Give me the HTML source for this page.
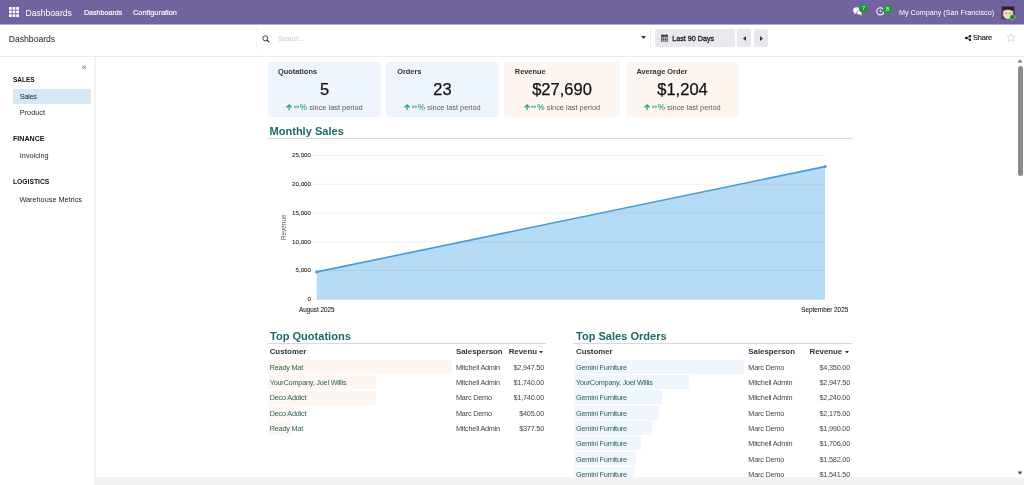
<!DOCTYPE html>
<html><head><meta charset="utf-8">
<style>
*{box-sizing:border-box;margin:0;padding:0}
html,body{width:1024px;height:485px;overflow:hidden;background:#fff;will-change:transform;font-family:"Liberation Sans",sans-serif;color:#222}
.a{position:absolute;white-space:nowrap;line-height:1}
#nav{position:absolute;left:0;top:0;width:1024px;height:24px;background:#71639e;color:#fff}
#cp{position:absolute;left:0;top:24px;width:1024px;height:33px;background:#fff;border-bottom:1px solid #eaeaea}
#side{position:absolute;left:0;top:57px;width:96px;height:428px;background:#fff;border-right:2px solid #f3f3f3}
.card{position:absolute;top:62px;height:55px;border-radius:4px}
.card .t{position:absolute;left:10px;top:6px;font-size:7.4px;font-weight:bold;color:#333;line-height:1}
.card .v{position:absolute;left:0;right:0;top:81px;text-align:center;font-size:16.5px;color:#111;line-height:1;-webkit-text-stroke:0.25px #111}
.card .d{position:absolute;left:0;right:0;top:42px;height:8px;display:flex;justify-content:center;align-items:baseline;font-size:7.4px;color:#5a5a5a;line-height:1}
.card .d .inf{margin-right:0.8px;position:relative;top:-1.5px}
.card .d .pct{color:#2aa07b;font-size:8.2px;margin-right:2.3px;-webkit-text-stroke:0.1px #2aa07b}
.card .d .sl{}
.h{position:absolute;font-weight:bold;font-size:11.05px;color:#1a6a66;line-height:1;white-space:nowrap}
.th{position:absolute;font-weight:bold;font-size:7.85px;color:#333;line-height:1;white-space:nowrap}
.td{position:absolute;font-size:7.3px;letter-spacing:-0.22px;color:#474747;line-height:1;white-space:nowrap}
.cu{color:#2a6153}
.r{text-align:right}
.bar{position:absolute;height:14px}
</style></head><body>
<div id="nav">
  <svg class="a" style="left:9.2px;top:7.1px" width="10" height="10" viewBox="0 0 10 10" fill="#fff"><rect x="0.00" y="0.00" width="2.75" height="2.75" rx="0.3"/><rect x="3.60" y="0.00" width="2.75" height="2.75" rx="0.3"/><rect x="7.20" y="0.00" width="2.75" height="2.75" rx="0.3"/><rect x="0.00" y="3.60" width="2.75" height="2.75" rx="0.3"/><rect x="3.60" y="3.60" width="2.75" height="2.75" rx="0.3"/><rect x="7.20" y="3.60" width="2.75" height="2.75" rx="0.3"/><rect x="0.00" y="7.20" width="2.75" height="2.75" rx="0.3"/><rect x="3.60" y="7.20" width="2.75" height="2.75" rx="0.3"/><rect x="7.20" y="7.20" width="2.75" height="2.75" rx="0.3"/></svg>
  <div class="a" style="left:25.5px;top:9px;font-size:8.6px">Dashboards</div>
  <div class="a" style="left:84px;top:9.6px;font-size:7.1px;-webkit-text-stroke:0.15px #fff">Dashboards</div>
  <div class="a" style="left:133px;top:9px;font-size:7.4px;-webkit-text-stroke:0.15px #fff">Configuration</div>
  <!-- chat icon -->
  <svg class="a" style="left:852.6px;top:7.4px" width="10" height="9" viewBox="0 0 11 10">
    <ellipse cx="4" cy="3.5" rx="3.9" ry="3.1" fill="#fff"/>
    <path d="M1.6 5.6 L1.2 8 L4 6.3Z" fill="#fff"/>
    <ellipse cx="7.1" cy="6.3" rx="3.1" ry="2.5" fill="#fff" stroke="#71639e" stroke-width="0.7"/>
    <path d="M8.8 8 L9.9 9.7 L7.4 8.6Z" fill="#fff"/>
  </svg>
  <div class="a" style="left:859.3px;top:4.4px;width:9px;height:9px;border-radius:50%;background:#21963b;color:#fff;font-size:5.2px;text-align:center;line-height:9px">7</div>
  <!-- clock icon -->
  <svg class="a" style="left:876.2px;top:7.4px" width="8.6" height="8.6" viewBox="0 0 9 9">
    <circle cx="4.5" cy="4.5" r="3.7" fill="none" stroke="#fff" stroke-width="1.1"/>
    <path d="M4.5 2.5 V4.7 H6" fill="none" stroke="#fff" stroke-width="0.8"/>
  </svg>
  <div class="a" style="left:883.2px;top:5px;width:8.6px;height:8.6px;border-radius:50%;background:#21963b;color:#fff;font-size:5.6px;text-align:center;line-height:8.6px">8</div>
  <div class="a" style="left:899px;top:9.2px;font-size:7.2px">My Company (San Francisco)</div>
  <!-- avatar -->
  <svg class="a" style="left:1001px;top:6px" width="15" height="15" viewBox="0 0 15 15">
    <rect x="0" y="0" width="14" height="13.6" rx="1" fill="#5a4058"/>
    <path d="M1.5 1 H12.5 V4 H1.5Z" fill="#2a1c26"/>
    <path d="M2.5 5 Q4 2.5 8 3 Q11.5 3.5 12 6 L12 10 Q10 13.5 6.5 13 Q3 12.5 2 9Z" fill="#f3dcc0"/>
    <path d="M3 4.5 Q7 2.6 12 5 L12 3.6 Q7 1.6 3 3.4Z" fill="#3a2630"/>
    <path d="M4 7.2H6.2M7.8 7.2H10.3" stroke="#8a6a5a" stroke-width="0.7"/>
    <circle cx="11.3" cy="11.2" r="2.6" fill="#0f8f22" stroke="#cfe" stroke-width="0.5"/>
  </svg>
</div>
<div id="cp">
  <div class="a" style="left:0;top:0;width:1024px;height:1px;background:#b3acc6"></div>
  <div class="a" style="left:8.8px;top:10.8px;font-size:8.6px;color:#222">Dashboards</div>
  <!-- search -->
  <div class="a" style="left:256px;top:4px;width:398px;height:22px;border-left:1px solid #f3f3f3"></div>
  <svg class="a" style="left:261.8px;top:10.8px" width="8" height="8" viewBox="0 0 8 8">
    <circle cx="3.3" cy="3.3" r="2.5" fill="none" stroke="#333" stroke-width="0.95"/>
    <path d="M5.1 5.1 L7 7" stroke="#333" stroke-width="1.1" stroke-linecap="round"/>
  </svg>
  <div class="a" style="left:278px;top:11.8px;font-size:6.6px;color:#c8c8c8">Search...</div>
  <svg class="a" style="left:640.5px;top:12px" width="5" height="3" viewBox="0 0 5 3"><path d="M0 0H5L2.5 3Z" fill="#333"/></svg>
  <div class="a" style="left:650px;top:4px;width:1px;height:20px;background:#eee"></div>
  <!-- date btn -->
  <div class="a" style="left:655px;top:5.2px;width:80px;height:17.5px;background:#e7e9ed;border-radius:2px"></div>
  <svg class="a" style="left:661px;top:10.3px" width="7.2" height="7.4" viewBox="0 0 7.2 7.4">
    <path d="M1.9 0.2V1.6M5.3 0.2V1.6" stroke="#333" stroke-width="0.9"/>
    <rect x="0.35" y="1.2" width="6.5" height="5.9" fill="none" stroke="#333" stroke-width="0.7"/>
    <rect x="0.35" y="1.2" width="6.5" height="1.5" fill="#333"/>
    <path d="M0.4 4.1H6.8M0.4 5.6H6.8M2.5 2.7V7M4.7 2.7V7" stroke="#333" stroke-width="0.55"/>
  </svg>
  <div class="a" style="left:672.2px;top:10.6px;font-size:7.2px;color:#222;-webkit-text-stroke:0.3px #222">Last 90 Days</div>
  <div class="a" style="left:737px;top:5.2px;width:14px;height:17.5px;background:#e7e9ed;border-radius:2px"></div>
  <svg class="a" style="left:742.5px;top:11.8px" width="3" height="5" viewBox="0 0 3 5"><path d="M3 0V5L0 2.5Z" fill="#333"/></svg>
  <div class="a" style="left:754px;top:5.2px;width:13.5px;height:17.5px;background:#e7e9ed;border-radius:2px"></div>
  <svg class="a" style="left:759.5px;top:11.8px" width="3" height="5" viewBox="0 0 3 5"><path d="M0 0V5L3 2.5Z" fill="#333"/></svg>
  <!-- share -->
  <svg class="a" style="left:964.5px;top:10.7px" width="6.4" height="6" viewBox="0 0 6.4 6">
    <circle cx="5.1" cy="1.2" r="1.2" fill="#111"/><circle cx="1.2" cy="3" r="1.2" fill="#111"/><circle cx="5.1" cy="4.8" r="1.2" fill="#111"/>
    <path d="M1.2 3L5.1 1.2M1.2 3L5.1 4.8" stroke="#111" stroke-width="0.9"/>
  </svg>
  <div class="a" style="left:973px;top:10.4px;font-size:7.4px;letter-spacing:-0.15px;color:#222;-webkit-text-stroke:0.15px #222">Share</div>
  <svg class="a" style="left:1006px;top:8.6px" width="10" height="9" viewBox="0 0 24 23">
    <path d="M12 1.5l3.1 6.6 7.2.9-5.3 5 1.4 7.1L12 17.6l-6.4 3.5 1.4-7.1-5.3-5 7.2-.9z" fill="none" stroke="#cfcfcf" stroke-width="1.8"/>
  </svg>
</div>
<div id="side">
  <svg class="a" style="left:81.6px;top:7.8px" width="4.6" height="4.4" viewBox="0 0 4.6 4.4"><path d="M2.2 0.4L0.5 2.2L2.2 4M4.2 0.4L2.5 2.2L4.2 4" fill="none" stroke="#555" stroke-width="0.8"/></svg>
  <div class="a" style="left:13px;top:20px;font-size:6.5px;font-weight:bold;color:#111">SALES</div>
  <div class="a" style="left:13.3px;top:32px;width:77.5px;height:15px;background:#d5e8f6;border-radius:1px"></div>
  <div class="a" style="left:19.8px;top:36px;font-size:7.3px;letter-spacing:-0.3px;color:#1f1f1f">Sales</div>
  <div class="a" style="left:19.8px;top:51.6px;font-size:7.3px;color:#1f1f1f">Product</div>
  <div class="a" style="left:13px;top:79px;font-size:7.1px;font-weight:bold;color:#111">FINANCE</div>
  <div class="a" style="left:19.8px;top:94.6px;font-size:7.3px;color:#1f1f1f">Invoicing</div>
  <div class="a" style="left:13px;top:122.2px;font-size:6.75px;font-weight:bold;color:#111">LOGISTICS</div>
  <div class="a" style="left:19.4px;top:138.7px;font-size:7.3px;color:#1f1f1f">Warehouse Metrics</div>
</div>
<!-- cards -->
<div class="card" style="left:268px;width:113px;background:#eff5fc">
  <div class="t">Quotations</div><div class="v" style="top:19px">5</div><div class="d"><svg width="6.2" height="6.4" viewBox="0 0 6.2 6.4" style="margin-right:1.3px;position:relative;top:0.4px"><path d="M3.1 0.1L6.1 3.1L5.2 3.9L3.7 2.5V6.3H2.5V2.5L1 3.9L0.1 3.1Z" fill="#2aa07b"/></svg><svg class="inf" width="5" height="3.6" viewBox="0 0 5 3.6"><path d="M2.5 1.8C1.9 0.7 0.4 0.5 0.4 1.8C0.4 3.1 1.9 2.9 2.5 1.8C3.1 0.7 4.6 0.5 4.6 1.8C4.6 3.1 3.1 2.9 2.5 1.8Z" fill="none" stroke="#2aa07b" stroke-width="0.75"/></svg><span class="pct">%</span><span class="sl">since last period</span></div>
</div>
<div class="card" style="left:386px;width:113px;background:#eff5fc">
  <div class="t" style="left:11.2px">Orders</div><div class="v" style="top:19px">23</div><div class="d"><svg width="6.2" height="6.4" viewBox="0 0 6.2 6.4" style="margin-right:1.3px;position:relative;top:0.4px"><path d="M3.1 0.1L6.1 3.1L5.2 3.9L3.7 2.5V6.3H2.5V2.5L1 3.9L0.1 3.1Z" fill="#2aa07b"/></svg><svg class="inf" width="5" height="3.6" viewBox="0 0 5 3.6"><path d="M2.5 1.8C1.9 0.7 0.4 0.5 0.4 1.8C0.4 3.1 1.9 2.9 2.5 1.8C3.1 0.7 4.6 0.5 4.6 1.8C4.6 3.1 3.1 2.9 2.5 1.8Z" fill="none" stroke="#2aa07b" stroke-width="0.75"/></svg><span class="pct">%</span><span class="sl">since last period</span></div>
</div>
<div class="card" style="left:504px;width:116px;background:#fdf5ef">
  <div class="t" style="left:10.8px">Revenue</div><div class="v" style="top:19px">$27,690</div><div class="d"><svg width="6.2" height="6.4" viewBox="0 0 6.2 6.4" style="margin-right:1.3px;position:relative;top:0.4px"><path d="M3.1 0.1L6.1 3.1L5.2 3.9L3.7 2.5V6.3H2.5V2.5L1 3.9L0.1 3.1Z" fill="#2aa07b"/></svg><svg class="inf" width="5" height="3.6" viewBox="0 0 5 3.6"><path d="M2.5 1.8C1.9 0.7 0.4 0.5 0.4 1.8C0.4 3.1 1.9 2.9 2.5 1.8C3.1 0.7 4.6 0.5 4.6 1.8C4.6 3.1 3.1 2.9 2.5 1.8Z" fill="none" stroke="#2aa07b" stroke-width="0.75"/></svg><span class="pct">%</span><span class="sl">since last period</span></div>
</div>
<div class="card" style="left:626px;width:113px;background:#fdf5ef">
  <div class="t" style="left:10.4px">Average Order</div><div class="v" style="top:19px">$1,204</div><div class="d"><svg width="6.2" height="6.4" viewBox="0 0 6.2 6.4" style="margin-right:1.3px;position:relative;top:0.4px"><path d="M3.1 0.1L6.1 3.1L5.2 3.9L3.7 2.5V6.3H2.5V2.5L1 3.9L0.1 3.1Z" fill="#2aa07b"/></svg><svg class="inf" width="5" height="3.6" viewBox="0 0 5 3.6"><path d="M2.5 1.8C1.9 0.7 0.4 0.5 0.4 1.8C0.4 3.1 1.9 2.9 2.5 1.8C3.1 0.7 4.6 0.5 4.6 1.8C4.6 3.1 3.1 2.9 2.5 1.8Z" fill="none" stroke="#2aa07b" stroke-width="0.75"/></svg><span class="pct">%</span><span class="sl">since last period</span></div>
</div>

<div class="h" style="left:269.5px;top:126.3px">Monthly Sales</div>
<div class="a" style="left:268px;top:138px;width:584px;height:1px;background:#d8d8d8"></div>

<!-- chart -->
<svg class="a" style="left:0;top:0" width="1024" height="485">

  <polygon points="316.8,271.9 825,166.6 825,299.6 316.8,299.6" fill="#b6dbf6"/>
  <g stroke="rgba(0,0,0,0.075)" stroke-width="0.8">
    <line x1="312" y1="155.4" x2="825" y2="155.4"/>
    <line x1="312" y1="184.2" x2="825" y2="184.2"/>
    <line x1="312" y1="213" x2="825" y2="213"/>
    <line x1="312" y1="241.8" x2="825" y2="241.8"/>
    <line x1="312" y1="270.6" x2="825" y2="270.6"/>
    <line x1="312" y1="299.4" x2="825" y2="299.4"/>
  </g>
  <line x1="316.8" y1="271.9" x2="825" y2="166.6" stroke="#4a9ad4" stroke-width="1.6"/>
  <circle cx="316.8" cy="271.9" r="1.6" fill="#4b9cd6"/>
  <circle cx="825" cy="166.6" r="1.6" fill="#4b9cd6"/>
  <g font-family="Liberation Sans" font-size="6.2" fill="#222" stroke="#222" stroke-width="0.08" text-anchor="end">
    <text x="311" y="157">25,000</text>
    <text x="311" y="186">20,000</text>
    <text x="311" y="214.8">15,000</text>
    <text x="311" y="243.5">10,000</text>
    <text x="311" y="272.3">5,000</text>
    <text x="311" y="301.1">0</text>
  </g>
  <text x="0" y="0" transform="translate(285.8,227.3) rotate(-90)" font-family="Liberation Sans" font-size="6.4" fill="#555" text-anchor="middle">Revenue</text>
  <g font-family="Liberation Sans" font-size="6.35" fill="#111" stroke="#111" stroke-width="0.05">
    <text x="299" y="312">August 2025</text>
    <text x="801.3" y="312">September 2025</text>
  </g>
</svg>

<!-- Top Quotations -->
<div class="h" style="left:270px;top:330.5px">Top Quotations</div>
<div class="a" style="left:268px;top:343px;width:278px;height:1px;background:#d8d8d8"></div>
<div class="th" style="left:269.7px;top:348.2px">Customer</div>
<div class="th" style="left:456px;top:348.2px">Salesperson</div>
<div class="th" style="left:508.7px;top:348.2px">Revenu</div>
<svg class="a" style="left:538.7px;top:351.3px" width="4" height="2.5" viewBox="0 0 4 2.5"><path d="M0 0H4L2 2.5Z" fill="#333"/></svg>
<div class="bar" style="left:268px;top:360.00px;width:184px;background:#fef7f1"></div>
<div class="bar" style="left:268px;top:375.33px;width:108px;background:#fef7f1"></div>
<div class="bar" style="left:268px;top:390.66px;width:108px;background:#fef7f1"></div>
<div class="bar" style="left:268px;top:405.99px;width:25px;background:#fef7f1"></div>
<div class="bar" style="left:268px;top:421.32px;width:23.5px;background:#fef7f1"></div>

<div class="td cu" style="left:269.7px;top:363.70px">Ready Mat</div>
<div class="td cu" style="left:269.7px;top:379.03px">YourCompany, Joel Willis</div>
<div class="td cu" style="left:269.7px;top:394.36px">Deco Addict</div>
<div class="td cu" style="left:269.7px;top:409.69px">Deco Addict</div>
<div class="td cu" style="left:269.7px;top:425.02px">Ready Mat</div>
<div class="td" style="left:456px;top:363.70px">Mitchell Admin</div>
<div class="td" style="left:456px;top:379.03px">Mitchell Admin</div>
<div class="td" style="left:456px;top:394.36px">Marc Demo</div>
<div class="td" style="left:456px;top:409.69px">Marc Demo</div>
<div class="td" style="left:456px;top:425.02px">Mitchell Admin</div>
<div class="td r" style="left:494px;width:50px;top:363.70px">$2,947.50</div>
<div class="td r" style="left:494px;width:50px;top:379.03px">$1,740.00</div>
<div class="td r" style="left:494px;width:50px;top:394.36px">$1,740.00</div>
<div class="td r" style="left:494px;width:50px;top:409.69px">$405.00</div>
<div class="td r" style="left:494px;width:50px;top:425.02px">$377.50</div>

<!-- Top Sales Orders -->
<div class="h" style="left:576px;top:330.5px">Top Sales Orders</div>
<div class="a" style="left:573px;top:343px;width:279px;height:1px;background:#d8d8d8"></div>
<div class="th" style="left:576px;top:348.2px">Customer</div>
<div class="th" style="left:748.3px;top:348.2px">Salesperson</div>
<div class="th" style="left:809.5px;top:348.2px">Revenue</div>
<svg class="a" style="left:844.8px;top:351.3px" width="4" height="2.5" viewBox="0 0 4 2.5"><path d="M0 0H4L2 2.5Z" fill="#333"/></svg>
<div class="bar" style="left:574px;top:359.60px;width:170px;background:#f0f6fd"></div>
<div class="bar" style="left:574px;top:374.93px;width:115px;background:#f0f6fd"></div>
<div class="bar" style="left:574px;top:390.26px;width:87.5px;background:#f0f6fd"></div>
<div class="bar" style="left:574px;top:405.59px;width:85px;background:#f0f6fd"></div>
<div class="bar" style="left:574px;top:420.92px;width:77.8px;background:#f0f6fd"></div>
<div class="bar" style="left:574px;top:436.25px;width:66.7px;background:#f0f6fd"></div>
<div class="bar" style="left:574px;top:451.58px;width:61.8px;background:#f0f6fd"></div>
<div class="bar" style="left:574px;top:466.91px;width:60.2px;background:#f0f6fd"></div>

<div class="td cu" style="left:576px;top:363.70px">Gemini Furniture</div>
<div class="td cu" style="left:576px;top:379.03px">YourCompany, Joel Willis</div>
<div class="td cu" style="left:576px;top:394.36px">Gemini Furniture</div>
<div class="td cu" style="left:576px;top:409.69px">Gemini Furniture</div>
<div class="td cu" style="left:576px;top:425.02px">Gemini Furniture</div>
<div class="td cu" style="left:576px;top:440.35px">Gemini Furniture</div>
<div class="td cu" style="left:576px;top:455.68px">Gemini Furniture</div>
<div class="td cu" style="left:576px;top:471.01px">Gemini Furniture</div>
<div class="td" style="left:748.3px;top:363.70px">Marc Demo</div>
<div class="td" style="left:748.3px;top:379.03px">Mitchell Admin</div>
<div class="td" style="left:748.3px;top:394.36px">Mitchell Admin</div>
<div class="td" style="left:748.3px;top:409.69px">Marc Demo</div>
<div class="td" style="left:748.3px;top:425.02px">Marc Demo</div>
<div class="td" style="left:748.3px;top:440.35px">Mitchell Admin</div>
<div class="td" style="left:748.3px;top:455.68px">Marc Demo</div>
<div class="td" style="left:748.3px;top:471.01px">Marc Demo</div>
<div class="td r" style="left:800px;width:50px;top:363.70px">$4,350.00</div>
<div class="td r" style="left:800px;width:50px;top:379.03px">$2,947.50</div>
<div class="td r" style="left:800px;width:50px;top:394.36px">$2,240.00</div>
<div class="td r" style="left:800px;width:50px;top:409.69px">$2,175.00</div>
<div class="td r" style="left:800px;width:50px;top:425.02px">$1,990.00</div>
<div class="td r" style="left:800px;width:50px;top:440.35px">$1,706.00</div>
<div class="td r" style="left:800px;width:50px;top:455.68px">$1,582.00</div>
<div class="td r" style="left:800px;width:50px;top:471.01px">$1,541.50</div>

<!-- bottom bar & scrollbar -->
<div class="a" style="left:96px;top:477px;width:928px;height:8px;background:#f3f3f3"></div>
<svg class="a" style="left:1017px;top:58.5px" width="6" height="4" viewBox="0 0 6 4"><path d="M0.5 3.6H5.5L3 0.3Z" fill="#777"/></svg>
<div class="a" style="left:1018px;top:66px;width:4.5px;height:109.5px;background:#8b8b8b;border-radius:2.5px"></div>
<svg class="a" style="left:1017px;top:470.5px" width="6" height="4" viewBox="0 0 6 4"><path d="M0.5 0.4H5.5L3 3.7Z" fill="#555"/></svg>
</body></html>
